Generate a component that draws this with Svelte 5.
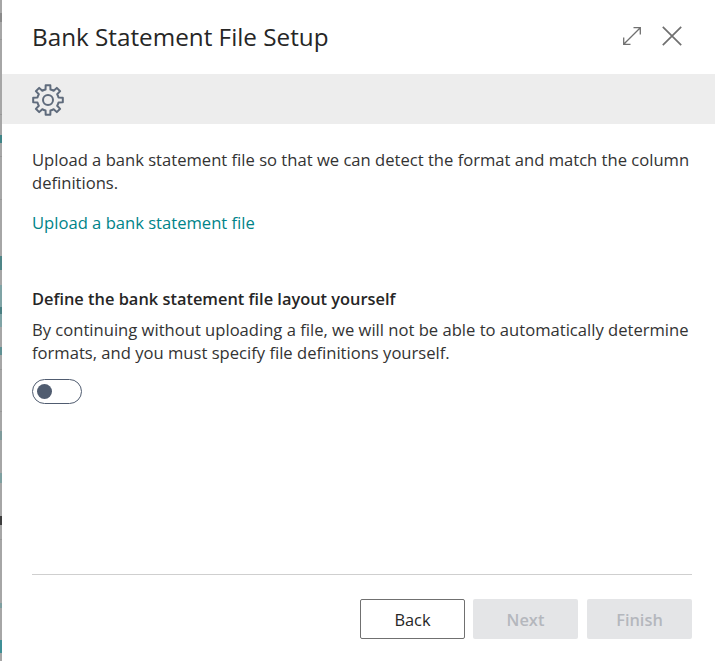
<script>
  // left edge: what shows of the page behind the dialog
  const marks = [
    { top: 13, height: 9, color: '#8a8a8a' },
    { top: 39, height: 1, color: '#989898' },
    { top: 114, height: 1, color: '#989898' },
    { top: 135, height: 8, color: '#3f8487' },
    { top: 156, height: 1, color: '#989898' },
    { top: 199, height: 1, color: '#989898' },
    { top: 256, height: 14, color: '#4f8587' },
    { top: 285, height: 42, color: '#7fa3a5' },
    { top: 307, height: 7, color: '#4a7f82' },
    { top: 347, height: 8, color: '#5f9093' },
    { top: 369, height: 1, color: '#989898' },
    { top: 411, height: 1, color: '#989898' },
    { top: 431, height: 9, color: '#7e9a9b' },
    { top: 473, height: 10, color: '#7e9fa0' },
    { top: 516, height: 9, color: '#3d3d3d' },
    { top: 539, height: 1, color: '#989898' },
    { top: 603, height: 5, color: '#7e9fa0' },
    { top: 640, height: 13, color: '#3f8f96' }
  ]

  // eight square-ish teeth round the centre of a 32 box
  function gearPath(cx, cy, outer, root) {
    const pt = (r, deg) => {
      const a = (deg * Math.PI) / 180
      return `${(cx + r * Math.cos(a)).toFixed(2)} ${(cy + r * Math.sin(a)).toFixed(2)}`
    }
    let d = ''
    for (let i = 0; i < 8; i++) {
      const c = i * 45
      d += `${i ? 'L' : 'M'}${pt(root, c - 13)} L${pt(outer, c - 9)} L${pt(outer, c + 9)} L${pt(root, c + 13)} `
      d += `A${root} ${root} 0 0 1 ${pt(root, c + 32)} `
    }
    return d + 'Z'
  }

  const gear = gearPath(16, 16, 15, 10.8)
</script>

<div class="page">
  <div class="behind">
    {#each marks as m}
      <span class="mark" style="top: {m.top}px; height: {m.height}px; background: {m.color}"></span>
    {/each}
  </div>

  <main class="dialog">
    <header class="head">
      <h1>Bank Statement File Setup</h1>
      <div class="head-icons">
        <svg width="18" height="18" viewBox="0 0 18 18" fill="none" stroke="#707070" stroke-width="1.3">
          <path d="M.7 17.3 17.3.7M10.5.7h6.8v6.8M.7 10.5v6.8h6.8" />
        </svg>
        <svg width="20" height="20" viewBox="0 0 20 20" fill="none" stroke="#707070" stroke-width="1.7">
          <path d="M.8.8 19.2 19.2M19.2.8.8 19.2" />
        </svg>
      </div>
    </header>

    <div class="toolbar">
      <svg width="32" height="32" viewBox="0 0 32 32" fill="none" stroke="#5f6b7c" stroke-width="2" stroke-linejoin="round">
        <circle cx="16" cy="16" r="5" />
        <path d={gear} />
      </svg>
    </div>

    <section class="content">
      <p>Upload a bank statement file so that we can detect the format and match the column definitions.</p>
      <a class="link" href="#upload">Upload a bank statement file</a>

      <h2>Define the bank statement file layout yourself</h2>
      <p>By continuing without uploading a file, we will not be able to automatically determine formats, and you must specify file definitions yourself.</p>
      <div class="toggle"><span class="knob"></span></div>
    </section>

    <footer class="foot">
      <button class="btn">Back</button>
      <button class="btn off" disabled>Next</button>
      <button class="btn off" disabled>Finish</button>
    </footer>
  </main>
</div>

<style>
  :global(body) {
    margin: 0;
    background: #fff;
  }

  .page {
    display: flex;
    height: 661px;
    font-family: "Open Sans", "Noto Sans", sans-serif;
    color: #333;
    overflow: hidden;
  }

  .behind {
    position: relative;
    width: 2px;
    flex: none;
    background: #a6a6a6;
  }

  .mark {
    position: absolute;
    left: 0;
    width: 2px;
  }

  .dialog {
    flex: 1;
    min-width: 0;
    display: flex;
    flex-direction: column;
  }

  .head {
    height: 74px;
    display: flex;
    align-items: center;
    justify-content: space-between;
    padding: 0 33px 2px 30px;
    box-sizing: border-box;
  }

  h1 {
    margin: 0;
    font-size: 24.25px;
    font-weight: 500;
    color: #262626;
  }

  .head-icons {
    display: flex;
    align-items: center;
    gap: 21px;
  }

  .toolbar {
    height: 50px;
    box-sizing: border-box;
    padding: 2px 0 0 30px;
    background: #ededed;
    display: flex;
    align-items: center;
  }

  .content {
    flex: 1;
    padding: 25px 23px 0 30px;
    font-size: 16.6px;
    line-height: 22.5px;
  }

  p {
    margin: 0;
  }

  .link {
    display: block;
    margin-top: 17.5px;
    color: #008489;
    text-decoration: none;
  }

  h2 {
    margin: 53px 0 9px;
    font-size: 16.4px;
    line-height: 23px;
    font-weight: 600;
    color: #262626;
  }

  .toggle {
    margin-top: 15px;
    width: 50px;
    height: 25px;
    box-sizing: border-box;
    border: 1px solid #505c70;
    border-radius: 13px;
    display: flex;
    align-items: center;
    padding-left: 4px;
    background: #fff;
  }

  .knob {
    width: 15px;
    height: 15px;
    border-radius: 50%;
    background: #505c70;
  }

  .foot {
    margin: 0 23px 0 30px;
    height: 87px;
    border-top: 1px solid #cfcfcf;
    display: flex;
    justify-content: flex-end;
    gap: 8px;
    padding-top: 24px;
    box-sizing: border-box;
  }

  .btn {
    width: 105px;
    height: 40px;
    box-sizing: border-box;
    border: 1px solid #707070;
    border-radius: 2px;
    background: #fff;
    font: 500 16.4px "Open Sans", "Noto Sans", sans-serif;
    color: #262626;
  }

  .btn:last-child {
    margin-left: 1px;
  }

  .off {
    border: none;
    background: #e4e5e7;
    color: #b4b7bd;
    font-weight: 600;
  }
</style>
